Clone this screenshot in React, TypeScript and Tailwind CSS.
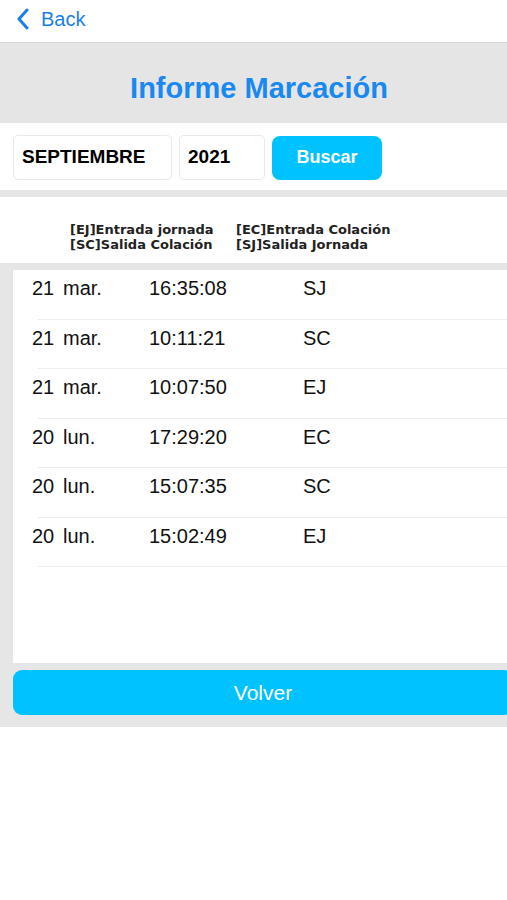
import React from "react";

const rows = [
  ["21", "mar.", "16:35:08", "SJ"],
  ["21", "mar.", "10:11:21", "SC"],
  ["21", "mar.", "10:07:50", "EJ"],
  ["20", "lun.", "17:29:20", "EC"],
  ["20", "lun.", "15:07:35", "SC"],
  ["20", "lun.", "15:02:49", "EJ"],
];

export default function App() {
  return (
    <div className="w-[507px] h-[900px] bg-white overflow-hidden" style={{ fontFamily: '"Liberation Sans", Arial, sans-serif' }}>
      {/* nav */}
      <div className="h-[43px] flex items-center pb-[4px] border-b border-[#d6d6d6]">
        <svg width="16" height="22" viewBox="0 0 16 22" className="ml-[15px]">
          <path d="M12 2 L4 11 L12 20" fill="none" stroke="#1a7fe8" strokeWidth="3" strokeLinecap="round" strokeLinejoin="round" />
        </svg>
        <span className="ml-[10px] text-[20px] text-[#1a7fe8] leading-none">Back</span>
      </div>
      {/* title */}
      <div className="h-[80px] bg-[#e5e5e5] flex items-center justify-center pt-[11px] pl-[11px]">
        <span className="text-[29px] font-bold text-[#1a89ef] leading-none">Informe Marcación</span>
      </div>
      {/* search */}
      <div className="h-[67px] flex items-center pt-[2px] pl-[13px] gap-[7px]">
        <div className="w-[159px] h-[45px] border border-[#e8e8e8] rounded-[5px] flex items-center pl-[8px] text-[19px] font-bold text-black">SEPTIEMBRE</div>
        <div className="w-[86px] h-[45px] border border-[#e8e8e8] rounded-[5px] flex items-center pl-[8px] text-[19px] font-bold text-black">2021</div>
        <div className="w-[110px] h-[44px] rounded-[8px] bg-[#00c2ff] flex items-center justify-center text-[18px] font-bold text-white">Buscar</div>
      </div>
      <div className="h-[7px] bg-[#e6e6e6]" />
      {/* legend */}
      <div className="h-[66px] flex items-center pl-[70px] text-[13px] font-bold text-[#222] leading-[15px]" style={{ fontFamily: '"DejaVu Sans", Verdana, sans-serif' }}>
        <div className="grid grid-cols-[166px_auto] mt-[14px]">
          <span>[EJ]Entrada jornada</span>
          <span>[EC]Entrada Colación</span>
          <span>[SC]Salida Colación</span>
          <span>[SJ]Salida Jornada</span>
        </div>
      </div>
      {/* list area */}
      <div className="bg-[#e6e6e6] pt-[7px] pl-[13px]">
        <div className="bg-white h-[393px]">
          {rows.map((r, i) => (
            <div key={i} className="h-[49.5px] relative flex items-start pt-[3px] text-[20px] text-[#111]">
              <span className="ml-[19px] w-[24px]">{r[0]}</span>
              <span className="ml-[7px] w-[86px]">{r[1]}</span>
              <span className="w-[154px]">{r[2]}</span>
              <span>{r[3]}</span>
              <div className="absolute left-[25px] right-0 bottom-0 h-px bg-[#ececec]" />
            </div>
          ))}
        </div>
        <div className="h-[64px] pt-[7px]">
          <div className="w-[500px] h-[45px] rounded-[9px] bg-[#00c2ff] flex items-center justify-center text-[21px] text-white">Volver</div>
        </div>
      </div>
    </div>
  );
}
